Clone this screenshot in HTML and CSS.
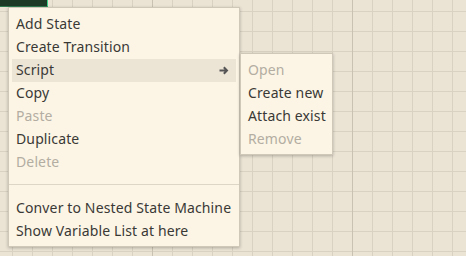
FILE: index.html
```html
<!DOCTYPE html>
<html lang="en">
<head>
    <meta charset="UTF-8">
    <title>State Machine Editor</title>
    <link rel="stylesheet" href="styles.css">
</head>
<body>
    <div class="canvas">
        <div class="node"></div>

        <ul class="menu">
            <li class="item">Add State</li>
            <li class="item">Create Transition</li>
            <li class="item has-sub active">Script
                <svg class="arrow" width="10" height="9" viewBox="0 0 10 9">
                    <path d="M0.5 4.5 H8 M4.8 1.2 L8 4.5 L4.8 7.8" fill="none" stroke="#555" stroke-width="2"/>
                </svg>
                <ul class="menu submenu">
                    <li class="item disabled">Open</li>
                    <li class="item">Create new</li>
                    <li class="item">Attach exist</li>
                    <li class="item disabled">Remove</li>
                </ul>
            </li>
            <li class="item">Copy</li>
            <li class="item disabled">Paste</li>
            <li class="item">Duplicate</li>
            <li class="item disabled">Delete</li>
            <li class="separator"></li>
            <li class="item">Conver to Nested State Machine</li>
            <li class="item">Show Variable List at here</li>
        </ul>
    </div>
</body>
</html>
```

FILE: styles.css
```css
body {
    margin: 0;
    font-family: 'Noto Sans', sans-serif;
    font-size: 14px;
    letter-spacing: 0.13px;
    color: #3a3936;
}

.canvas {
    position: relative;
    width: 466px;
    height: 256px;
    overflow: hidden;
    background-color: #ebe4d5;
    background-image:
        linear-gradient(to right, #c9c2b3 1px, transparent 1px),
        linear-gradient(to right, #d9d2c3 1px, transparent 1px),
        linear-gradient(to bottom, #d9d2c3 1px, transparent 1px);
    background-size: 200px 100%, 20px 20px, 20px 20px;
    background-position: 152px 0, 12px 0, 0 11px;
}

.node {
    width: 47px;
    height: 6px;
    background: #1c3a25;
    border-right: 1px solid #3ed18a;
    border-bottom: 1px solid #2f7a4f;
}

.menu {
    list-style: none;
    margin: 0;
    position: absolute;
    left: 8px;
    top: 7px;
    width: 232px;
    box-sizing: border-box;
    padding: 5px 3px 3px 3px;
    background: #fcf5e5;
    border: 1px solid #cfc8b9;
    box-shadow: 0 1px 3px rgba(0, 0, 0, 0.25);
}

.item {
    position: relative;
    height: 23px;
    line-height: 22px;
    padding-left: 4px;
    white-space: nowrap;
}

.item.active {
    background: #ece5d6;
}

.item.disabled {
    color: #b3ada2;
}

.arrow {
    position: absolute;
    right: 7px;
    top: 7px;
}

.separator {
    margin: 0 -3px 12px;
    height: 11px;
    box-sizing: border-box;
    border-bottom: 1px solid #ddd6c7;
}

.submenu {
    left: calc(100% + 4px);
    top: -6px;
    width: 93px;
    color: #3a3936;
}
```
